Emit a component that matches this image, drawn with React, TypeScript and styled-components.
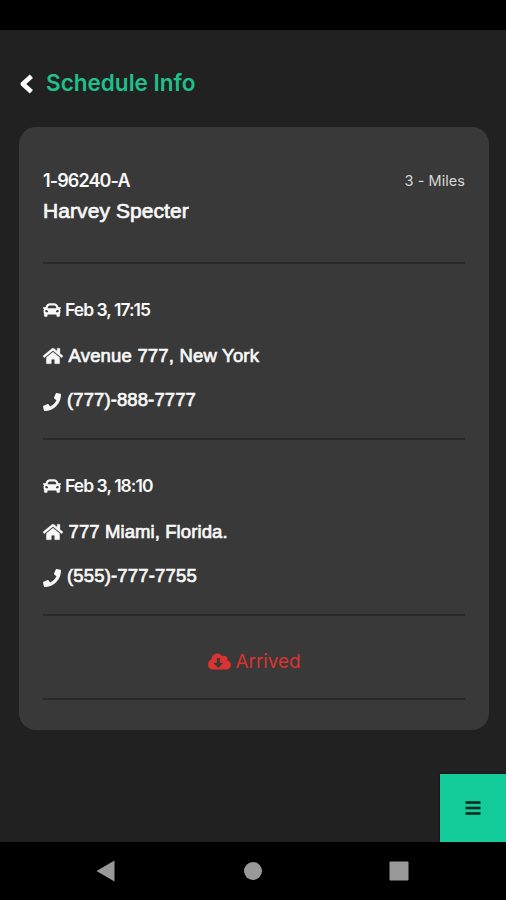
import React from 'react';
import styled, { createGlobalStyle } from 'styled-components';
import { FaCar, FaHome, FaPhone, FaCloudDownloadAlt } from 'react-icons/fa';

const GlobalStyle = createGlobalStyle`
  * { box-sizing: border-box; }
  html, body { margin: 0; padding: 0; background: #000; }
`;

const Screen = styled.div`
  width: 506px;
  height: 900px;
  display: flex;
  flex-direction: column;
  background: #212121;
  color: #f8f8f8;
  overflow: hidden;
  font-family: Inter, 'Liberation Sans', sans-serif;
`;

const StatusBar = styled.div`
  height: 30px;
  flex: none;
  background: #000;
`;

const Header = styled.header`
  height: 97px;
  flex: none;
  display: flex;
  align-items: center;
  padding: 9px 0 0 19px;
`;

const BackButton = styled.button`
  width: 27px;
  padding: 2px 0 0;
  border: 0;
  background: none;
  color: #fff;
  display: flex;
`;

const Title = styled.h1`
  margin: 0;
  font-size: 22.5px;
  line-height: 30px;
  font-weight: 600;
  letter-spacing: 0;
  color: #20bf8b;
  white-space: nowrap;
`;

const Card = styled.main`
  width: 470px;
  height: 603px;
  flex: none;
  margin-left: 19px;
  padding: 0 24px;
  border-radius: 17px;
  background: #393939;
`;

const Section = styled.section<{ $height: number; $top: number }>`
  height: ${(p) => p.$height}px;
  padding-top: ${(p) => p.$top}px;
  border-bottom: 2px solid #292929;
`;

const Row = styled.div<{ $height: number }>`
  height: ${(p) => p.$height}px;
  display: flex;
  align-items: center;
`;

const IconSlot = styled.span<{ $width: number; $drop?: number }>`
  width: ${(p) => p.$width}px;
  padding-top: ${(p) => p.$drop ?? 0}px;
  flex: none;
  display: flex;
  align-items: center;
`;

const Round = styled.span<{ $size: number; $spacing: number; $weight?: number }>`
  font-size: ${(p) => p.$size}px;
  font-weight: ${(p) => p.$weight ?? 600};
  letter-spacing: ${(p) => p.$spacing}px;
  white-space: nowrap;
`;

const Plain = styled.span<{ $size: number; $spacing: number }>`
  font-family: 'Liberation Sans', Arial, sans-serif;
  font-size: ${(p) => p.$size}px;
  letter-spacing: ${(p) => p.$spacing}px;
  -webkit-text-stroke: 0.7px currentColor;
  white-space: nowrap;
`;

const Distance = styled(Round)`
  margin-left: auto;
  padding-top: 1px;
  color: #d6d6d6;
`;

const Status = styled(Row)`
  justify-content: center;
  color: #da3331;
`;

const Footer = styled.div`
  flex: 1;
  display: flex;
  justify-content: flex-end;
  align-items: flex-end;
`;

const MenuButton = styled.button`
  width: 66px;
  height: 68px;
  padding: 0;
  border: 0;
  display: flex;
  align-items: center;
  justify-content: center;
  background: #14cc99;
  box-shadow: 0 0 2px #000;
`;

const NavBar = styled.nav`
  height: 58px;
  flex: none;
  display: flex;
  justify-content: space-between;
  align-items: center;
  padding: 0 97px 0 96px;
  background: #000;
`;

const stops = [
  { time: 'Feb 3, 17:15', timeGap: -0.97, address: 'Avenue 777, New York', addressGap: 0.19, phone: '(777)-888-7777', phoneGap: 0.1 },
  { time: 'Feb 3, 18:10', timeGap: -0.95, address: '777 Miami, Florida.', addressGap: 0.1, phone: '(555)-777-7755', phoneGap: 0.17 },
];

export default function App() {
  return (
    <Screen>
      <GlobalStyle />
      <StatusBar />
      <Header>
        <BackButton aria-label="Back">
          <svg width="15" height="20" viewBox="0 0 15 20" fill="none" stroke="currentColor" strokeWidth="4.6" strokeLinejoin="round">
            <path d="M12.4 2.2L3.8 10L12.4 17.8" />
          </svg>
        </BackButton>
        <Title>Schedule Info</Title>
      </Header>
      <Card>
        <Section $height={137} $top={38}>
          <Row $height={30}>
            <Round $size={18} $spacing={-0.9}>1-96240-A</Round>
            <Distance $size={14.5} $spacing={0.05} $weight={400}>3 - Miles</Distance>
          </Row>
          <Row $height={31}>
            <Plain $size={21} $spacing={0.08}>Harvey Specter</Plain>
          </Row>
        </Section>
        {stops.map((s) => (
          <Section key={s.time} $height={176} $top={30}>
            <Row $height={30}>
              <IconSlot $width={22} $drop={1}><FaCar size={18} /></IconSlot>
              <Round $size={17.5} $spacing={s.timeGap}>{s.time}</Round>
            </Row>
            <Row $height={64}>
              <IconSlot $width={25.5}><FaHome size={20} stroke="currentColor" strokeWidth={8} /></IconSlot>
              <Plain $size={18.5} $spacing={s.addressGap}>{s.address}</Plain>
            </Row>
            <Row $height={23}>
              <IconSlot $width={24} $drop={4}><FaPhone size={18} /></IconSlot>
              <Plain $size={18.5} $spacing={s.phoneGap}>{s.phone}</Plain>
            </Row>
          </Section>
        ))}
        <Section $height={84} $top={29}>
          <Status $height={32}>
            <IconSlot $width={28}><FaCloudDownloadAlt size={23} /></IconSlot>
            <Round $size={19} $spacing={-0.1} $weight={400}>Arrived</Round>
          </Status>
        </Section>
      </Card>
      <Footer>
        <MenuButton aria-label="Menu">
          <svg width="16" height="14" viewBox="0 0 16 14" fill="none" stroke="#06251d" strokeWidth="2.4">
            <path d="M0.5 1.5H15.5M0.5 7H15.5M0.5 12.5H15.5" />
          </svg>
        </MenuButton>
      </Footer>
      <NavBar>
        <svg width="19" height="22" viewBox="0 0 19 22"><path d="M0.5 11L18.5 0.5V21.5Z" fill="#999" /></svg>
        <svg width="20" height="20" viewBox="0 0 20 20"><circle cx="11" cy="10" r="9" fill="#999" /></svg>
        <svg width="20" height="20" viewBox="0 0 20 20"><rect x="0.5" y="0.5" width="19" height="19" rx="1" fill="#999" /></svg>
      </NavBar>
    </Screen>
  );
}
